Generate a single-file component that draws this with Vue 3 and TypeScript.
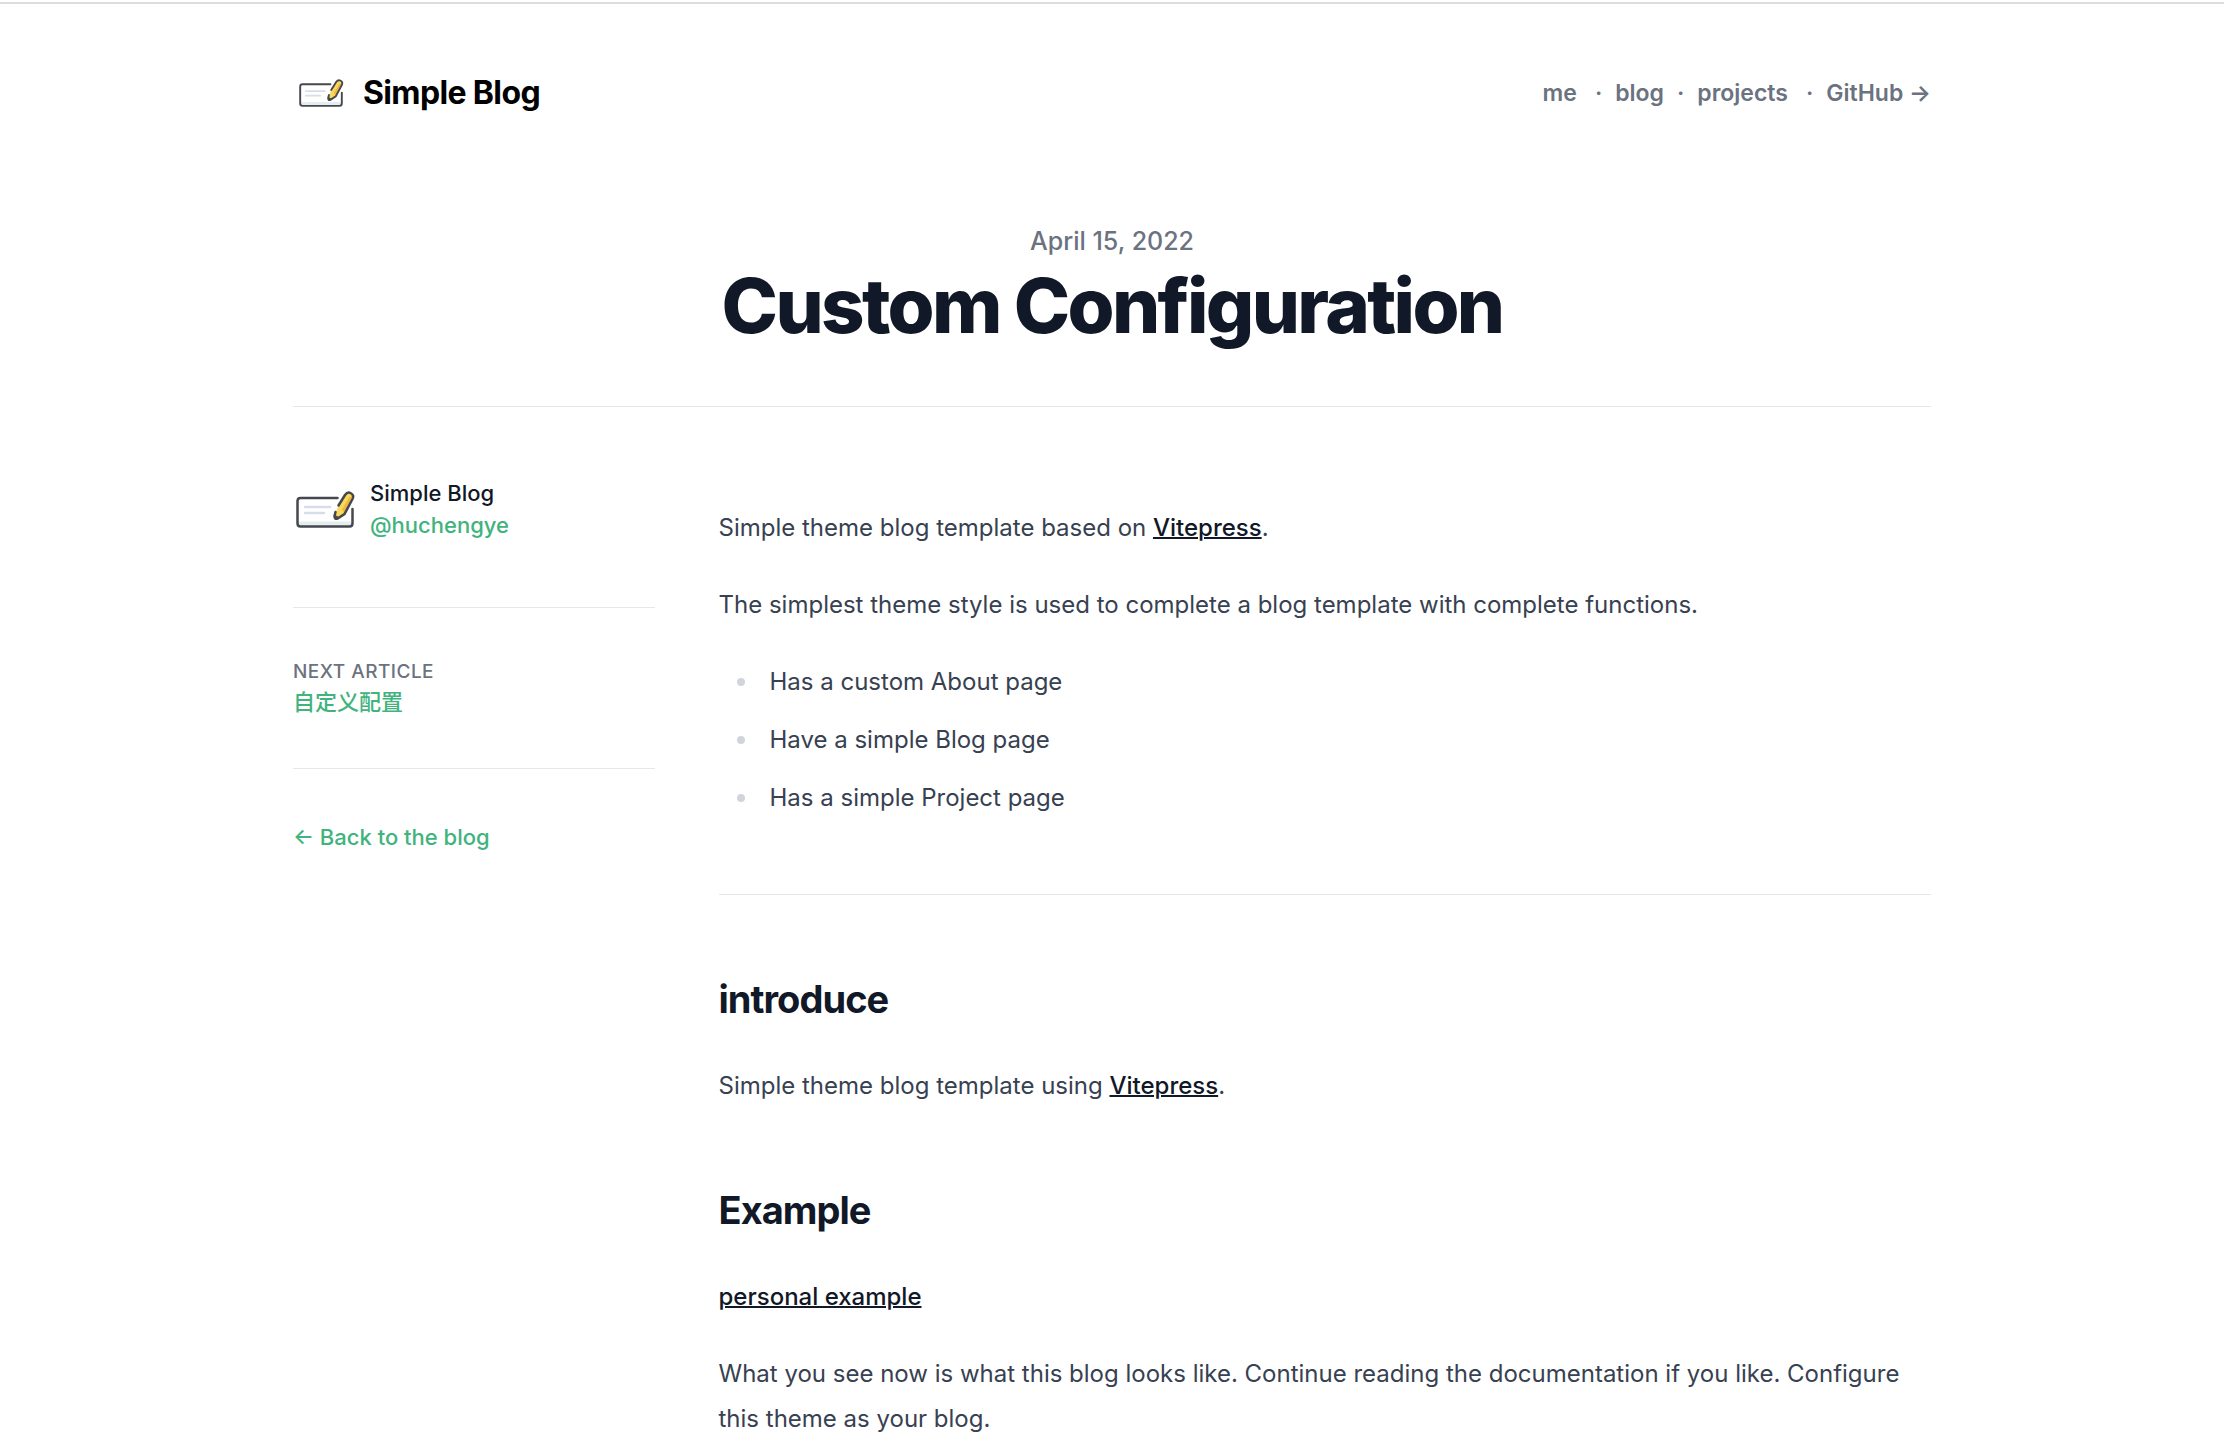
<script setup lang="ts">
import { defineComponent, h } from 'vue'

interface NavItem {
  label: string
  href: string
  loose?: boolean
}

const nav: NavItem[] = [
  { label: 'me', href: '#me', loose: true },
  { label: 'blog', href: '#blog' },
  { label: 'projects', href: '#projects', loose: true },
  { label: 'GitHub →', href: '#github' },
]

const features: string[] = [
  'Has a custom About page',
  'Have a simple Blog page',
  'Has a simple Project page',
]

const outline = { fill: 'none', stroke: '#45484f', 'stroke-width': 5, 'stroke-linecap': 'round' }
const ruled = { stroke: '#d6dee9', 'stroke-width': 5, 'stroke-linecap': 'round' }

// Note card with a pencil lying over its right edge.
const NoteIcon = defineComponent({
  render: () =>
    h('svg', { viewBox: '0 0 116 74', 'aria-hidden': 'true' }, [
      h('rect', { x: 4, y: 15, width: 108, height: 55, rx: 6, fill: '#fff' }),
      h('path', { d: 'M5 61H111V66Q111 70 106 70H10Q5 70 5 66Z', fill: '#e4eeef' }),
      h('path', { ...ruled, d: 'M18 32H68M18 44H56' }),
      h('path', { ...outline, d: 'M83 14H9Q3 14 3 20V65Q3 71 9 71H107Q113 71 113 65V36' }),
      h('path', { d: 'M83 35L98 8Q103 1 109 4Q117 8 113 16L97 46L83 55Q77 57 77 50Z', fill: '#fbd75a' }),
      h('path', { d: 'M92 37L107 11L111 13L96 43Z', fill: '#efb840' }),
      h('path', { d: 'M77 47L87 53L81 58Q75 58 76 52Z', fill: '#45484f' }),
      h('path', { ...outline, d: 'M85 29L98 8Q103 1 109 4Q117 8 113 16L97 46L83 55Q77 57 77 50L79 42' }),
    ]),
})
</script>

<template>
  <div class="page">
    <div class="wrap">
      <header class="top">
        <a class="brand" href="#home">
          <NoteIcon class="brand-icon" />
          <span>Simple Blog</span>
        </a>
        <nav class="nav" aria-label="Main">
          <template v-for="(item, i) in nav" :key="item.label">
            <span v-if="i > 0" class="dot">·</span>
            <a :href="item.href" :class="{ loose: item.loose }">{{ item.label }}</a>
          </template>
        </nav>
      </header>

      <div class="heading">
        <time datetime="2022-04-15">April 15, 2022</time>
        <h1>Custom Configuration</h1>
      </div>

      <div class="columns">
        <aside class="side">
          <div class="author">
            <NoteIcon class="author-icon" />
            <div>
              <div class="name">Simple Blog</div>
              <a href="#author">@huchengye</a>
            </div>
          </div>
          <div class="next">
            <h2>Next Article</h2>
            <a href="#next" lang="zh">自定义配置</a>
          </div>
          <div class="back">
            <a href="#blog">← Back to the blog</a>
          </div>
        </aside>

        <main class="prose">
          <p>Simple theme blog template based on <a href="#vitepress">Vitepress</a>.</p>
          <p>The simplest theme style is used to complete a blog template with complete functions.</p>
          <ul>
            <li v-for="feature in features" :key="feature">{{ feature }}</li>
          </ul>
          <hr />
          <h2>introduce</h2>
          <p>Simple theme blog template using <a href="#vitepress">Vitepress</a>.</p>
          <h2>Example</h2>
          <p><a href="#example">personal example</a></p>
          <p>
            What you see now is what this blog looks like. Continue reading the documentation if you
            like. Configure this theme as your blog.
          </p>
        </main>
      </div>
    </div>
  </div>
</template>

<style>
body {
  background: #fff;
}
</style>

<style scoped>
.page {
  border-top: 2px solid #dcdcdd;
  margin-top: 2px;
  font-family: Inter, 'Noto Sans CJK SC', sans-serif;
  color: #111827;
}
.wrap {
  max-width: 1638px;
  margin: 0 auto;
  padding: 0 32px;
}
a {
  text-decoration: none;
}
svg {
  overflow: visible;
}
.top {
  display: flex;
  align-items: center;
  justify-content: space-between;
  padding-top: 64px;
}
.brand {
  display: flex;
  align-items: center;
  gap: 20px;
  padding-left: 6px;
  font-size: 32px;
  line-height: 46px;
  font-weight: 700;
  letter-spacing: -0.02em;
  color: #000;
}
.brand-icon {
  width: 44px;
  height: 28px;
}
.nav {
  display: flex;
  gap: 13px;
  font-size: 23px;
  line-height: 50px;
  font-weight: 600;
  color: #6b7280;
}
.nav a {
  color: inherit;
}
.nav .loose {
  padding-right: 5px;
}
.heading {
  padding: 104px 0 56px;
  border-bottom: 1px solid #e5e7eb;
  text-align: center;
}
time {
  display: block;
  font-size: 25px;
  line-height: 38px;
  font-weight: 500;
  color: #6b7280;
}
h1 {
  margin: 0;
  font-size: 76px;
  line-height: 90px;
  font-weight: 800;
  letter-spacing: -0.035em;
}
.columns {
  display: grid;
  grid-template-columns: repeat(4, minmax(0, 1fr));
  column-gap: 64px;
}
.side {
  font-size: 22px;
  line-height: 32px;
  font-weight: 500;
}
.side a {
  color: #41b37d;
}
.author {
  display: flex;
  align-items: center;
  gap: 16px;
  padding: 70px 0 66px 3px;
}
.author-icon {
  width: 58px;
  height: 37px;
}
.next {
  padding: 50px 0;
  border: solid #e5e7eb;
  border-width: 1px 0;
}
.next h2 {
  margin: 0;
  font-size: 19px;
  line-height: 28px;
  font-weight: 500;
  letter-spacing: 0.025em;
  text-transform: uppercase;
  color: #6b7280;
}
.back {
  padding-top: 52px;
}
.prose {
  grid-column: span 3;
  padding-top: 98px;
  font-size: 24px;
  line-height: 45px;
  color: #374151;
}
.prose p {
  margin: 0 0 32px;
}
.prose a {
  font-weight: 500;
  color: #111827;
  text-decoration: underline;
  text-decoration-thickness: 2px;
}
.prose ul {
  margin: 0 0 74px;
  padding: 0;
  list-style: none;
}
.prose li {
  display: flex;
  align-items: center;
  gap: 25px;
  margin-bottom: 13px;
  padding-left: 18px;
}
.prose li::before {
  content: '';
  width: 8px;
  height: 8px;
  border-radius: 50%;
  background: #d1d5db;
}
.prose hr {
  margin: 0 0 79px;
  border: 0;
  border-top: 1px solid #e5e7eb;
}
.prose h2 {
  margin: 0 0 38px;
  font-size: 38px;
  line-height: 51px;
  font-weight: 700;
  letter-spacing: -0.025em;
  color: #111827;
}
.prose p + h2 {
  margin-top: 77px;
}
</style>
